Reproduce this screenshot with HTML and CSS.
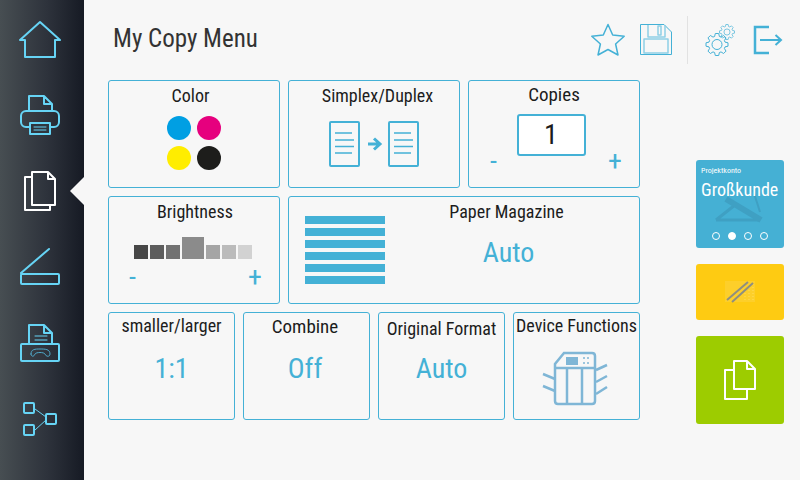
FILE: index.html
```html
<!DOCTYPE html>
<html lang="en">
<head>
    <meta charset="UTF-8">
    <meta name="viewport" content="width=device-width, initial-scale=1.0">
    <title>My Copy Menu</title>
    <link rel="stylesheet" href="styles.css">
</head>
<body>
    <nav class="sidebar">
        <div class="nav-item">
            <svg class="nav-icon" viewBox="16 15 48 48"><path d="M40 22 L60 40 H55 V57 H25 V40 H20 Z"/></svg>
        </div>
        <div class="nav-item">
            <svg class="nav-icon" viewBox="16 92 48 48">
                <path d="M29 112 V97 H44 L52 105 V112 M44 97 V105 H52"/>
                <rect x="21" y="112" width="38" height="16" rx="5"/>
                <rect class="tray" x="30" y="124" width="20" height="11"/>
                <path class="thin" d="M34 128 H46 M34 131 H46"/>
            </svg>
        </div>
        <div class="nav-item nav-item-active">
            <svg class="nav-icon nav-icon-white" viewBox="16 168 48 48">
                <path d="M32 178 H25 V211 H50 V206"/>
                <path d="M32 173 H48 L55 180 V206 H32 Z M48 173 V180 H55"/>
            </svg>
        </div>
        <div class="nav-item">
            <svg class="nav-icon" viewBox="16 244 48 48">
                <path d="M49 250 L21 274"/>
                <rect x="21" y="275" width="38" height="10" rx="1"/>
            </svg>
        </div>
        <div class="nav-item">
            <svg class="nav-icon" viewBox="16 320 48 48">
                <path d="M29 345 V326 H44 L52 334 V345 M44 326 V334 H52"/>
                <rect x="21" y="345" width="38" height="17" rx="1"/>
                <path class="thin" d="M35 337 H47 M35 341 H47"/>
                <path class="thin thin-dim" d="M31 355 C31 350 35 350 40 350 C45 350 50 350 50 355 C50 358 46 358 45 355 C44 353 36 353 35 355 C34 358 31 358 31 355 Z"/>
            </svg>
        </div>
        <div class="nav-item">
            <svg class="nav-icon" viewBox="16 396 48 48">
                <rect x="24" y="404" width="10" height="10" rx="1"/>
                <rect x="24" y="426" width="10" height="10" rx="1"/>
                <rect x="46" y="415" width="10" height="10" rx="1"/>
                <path class="thin" d="M35 410 L46 418 M35 431 L46 421"/>
            </svg>
        </div>
    </nav>

    <main class="main">
        <header class="topbar">
            <h1 class="page-title">My Copy Menu</h1>
            <div class="top-actions">
                <svg class="top-icon" viewBox="584 16 48 48">
                    <path d="M608 24.5 L612.7 35 L624.2 36.2 L615.6 44 L618 55 L608 49.5 L598 55 L600.4 44 L591.8 36.2 L603.3 35 Z"/>
                </svg>
                <svg class="top-icon top-icon-thin" viewBox="632 16 48 48">
                    <path d="M640.500 24.500 H664 L671.500 32 V54.500 H640.500 Z"/>
                    <path class="pale" d="M648 25 V37 H665 V25 M658 26 H661 V35 H658 Z M644 53 V39 H668 V53 Z"/>
                </svg>
                <div class="top-divider"></div>
                <svg class="top-icon top-icon-thin" viewBox="696 16 48 48">
                    <defs>
                        <path id="gear" d="M-2.4-8 L-1.7-11 H1.7 L2.4-8 L4-7.4 L6.6-9 L9-6.6 L7.4-4 L8-2.4 L11-1.7 V1.7 L8 2.4 L7.4 4 L9 6.6 L6.6 9 L4 7.4 L2.4 8 L1.7 11 H-1.7 L-2.4 8 L-4 7.4 L-6.6 9 L-9 6.6 L-7.4 4 L-8 2.4 L-11 1.7 V-1.7 L-8-2.4 L-7.4-4 L-9-6.6 L-6.6-9 L-4-7.4 Z"/>
                    </defs>
                    <use href="#gear" x="717" y="44.5"/>
                    <circle cx="717" cy="44.5" r="5"/>
                    <g transform="translate(727 32) scale(.68)"><use href="#gear"/><circle r="4.5"/></g>
                </svg>
                <svg class="top-icon top-icon-bold" viewBox="744 16 48 48">
                    <path d="M769 27 H755 V53 H769"/>
                    <path class="exit-arrow" d="M760 40 H781 M775.500 35 L781 40 L775.500 45"/>
                </svg>
            </div>
        </header>

        <div class="content">
            <section class="tiles">
                <div class="tile-row">
                    <div class="tile">
                        <div class="tile-title tile-title-low title-left">Color</div>
                        <div class="ink-grid">
                            <span class="ink ink-cyan"></span>
                            <span class="ink ink-magenta"></span>
                            <span class="ink ink-yellow"></span>
                            <span class="ink ink-black"></span>
                        </div>
                    </div>
                    <div class="tile">
                        <div class="tile-title tile-title-low title-right">Simplex/Duplex</div>
                        <svg class="duplex-icon" viewBox="326 118 97 53">
                            <rect x="330" y="123" width="29" height="44" rx="1"/>
                            <rect x="389" y="123" width="29" height="44" rx="1"/>
                            <path class="duplex-lines" d="M335 134 H352 M335 141 H354 M335 147.500 H354 M335 154 H352 M394 134 H411 M394 141 H413 M394 147.500 H413 M394 154 H411"/>
                            <path class="duplex-arrow" d="M368 145 H379 M374 139.500 L380 145 L374 150.500"/>
                        </svg>
                    </div>
                    <div class="tile">
                        <div class="tile-title tile-title-large">Copies</div>
                        <div class="copies-box">1</div>
                        <div class="stepper stepper-copies"><span>-</span><span>+</span></div>
                    </div>
                </div>

                <div class="tile-row">
                    <div class="tile tile-brightness">
                        <div class="tile-title tile-title-low title-nudge">Brightness</div>
                        <div class="levels">
                            <span class="level level-1"></span>
                            <span class="level level-2"></span>
                            <span class="level level-3"></span>
                            <span class="level level-4"></span>
                            <span class="level level-5"></span>
                            <span class="level level-6"></span>
                            <span class="level level-7"></span>
                        </div>
                        <div class="stepper"><span>-</span><span>+</span></div>
                    </div>
                    <div class="tile tile-wide">
                        <div class="paper-stack">
                            <span></span><span></span><span></span><span></span><span></span><span></span>
                        </div>
                        <div class="paper-info">
                            <div class="tile-title tile-title-low">Paper Magazine</div>
                            <div class="tile-value tile-value-paper">Auto</div>
                        </div>
                    </div>
                </div>

                <div class="tile-row tile-row-small">
                    <div class="tile">
                        <div class="tile-title tile-title-high">smaller/larger</div>
                        <div class="tile-value">1:1</div>
                    </div>
                    <div class="tile tile-combine">
                        <div class="tile-title tile-title-large">Combine</div>
                        <div class="tile-value">Off</div>
                    </div>
                    <div class="tile">
                        <div class="tile-title tile-title-lower">Original Format</div>
                        <div class="tile-value">Auto</div>
                    </div>
                    <div class="tile">
                        <div class="tile-title tile-title-high">Device Functions</div>
                        <svg class="device-icon" viewBox="541 350 68 56">
                            <path d="M555 401 V364 L564 353 H592 Q595 353 595 356 V401 Q595 404 592 404 H558 Q555 404 555 401 Z M555 368 H595 M567 368 V404 M582 368 V404"/>
                            <path d="M543 374 L555 379 M543 386 L555 391 M596 370 L607 365 M596 382 L607 376 M596 394 L607 387"/>
                            <rect class="device-panel" x="566" y="357" width="12" height="8"/>
                            <path class="device-dots" d="M583 358 h2 M587 358 h2 M583 363 h2 M587 363 h2"/>
                        </svg>
                    </div>
                </div>
            </section>

            <aside class="side">
                <div class="side-card side-account">
                    <svg class="account-mark" viewBox="696 160 88 88">
                        <path d="M716 220 L735 205 M716 220 H758"/>
                        <path class="account-mark-bar" d="M726 199 L761 220"/>
                        <path class="account-mark-thin" d="M753 190 L760 212"/>
                    </svg>
                    <div class="account-label">Projektkonto</div>
                    <div class="account-name">Großkunde</div>
                    <div class="dots">
                        <span class="dot"></span><span class="dot dot-on"></span><span class="dot"></span><span class="dot"></span>
                    </div>
                </div>
                <div class="side-card side-staple">
                    <svg class="staple-icon" viewBox="720 276 40 32">
                        <rect class="staple-sheet" x="725" y="281" width="30" height="21"/>
                        <path class="staple-dots" d="M745 300 V289 M749 300 V286 M753 300 V284"/>
                        <path d="M727 300 L748 282 M732 302 L753 283"/>
                    </svg>
                </div>
                <div class="side-card side-start">
                    <svg class="start-icon" viewBox="716 356 48 48">
                        <path d="M734 370 H725 V399 H747 V389"/>
                        <path d="M734 361 H747 L755 369 V389 H734 Z M747 361 V369 H755"/>
                    </svg>
                </div>
            </aside>
        </div>
    </main>
</body>
</html>
```

FILE: styles.css
```css
* {
    box-sizing: border-box;
}

body {
    margin: 0;
    width: 800px;
    height: 480px;
    display: flex;
    overflow: hidden;
    background: #f7f7f7;
    font-family: 'Roboto', 'Liberation Sans', sans-serif;
    font-stretch: 75%;
    color: #1c1c1c;
}

/* Left navigation */
.sidebar {
    width: 84px;
    height: 480px;
    padding: 1px 4px 0 0;
    flex-shrink: 0;
    background: linear-gradient(90deg, #474e52, #2e333c 55%, #161a24);
}

.nav-item {
    position: relative;
    height: 76px;
    display: flex;
    justify-content: center;
    align-items: center;
}

.nav-item-active::after {
    content: "";
    position: absolute;
    right: -4px;
    top: 24px;
    border-style: solid;
    border-width: 14px 14px 14px 0;
    border-color: transparent #f7f7f7 transparent transparent;
}

.nav-icon {
    width: 48px;
    height: 48px;
    fill: none;
    stroke: #66d4f5;
    stroke-width: 2;
    stroke-linejoin: round;
    stroke-linecap: round;
}

.nav-icon-white {
    stroke: #fff;
}

.nav-icon .tray {
    fill: #30363e;
}

.nav-icon .thin {
    stroke-width: 1;
}

.nav-icon .thin-dim {
    stroke: #4fa9c9;
}

/* Main area */
.main {
    flex: 1;
    display: flex;
    flex-direction: column;
    padding-left: 24px;
}

.topbar {
    height: 80px;
    display: flex;
    justify-content: space-between;
    align-items: center;
}

.page-title {
    margin: 0 0 4px 5px;
    font-size: 25px;
    font-weight: 400;
    color: #333;
}

.top-actions {
    display: flex;
    align-items: center;
    margin-right: 8px;
}

.top-icon {
    width: 48px;
    height: 48px;
    fill: none;
    stroke: #44b1d6;
    stroke-width: 1.5;
    stroke-linejoin: round;
}

.top-icon-thin {
    stroke-width: 1;
}

.top-icon-bold {
    stroke-width: 2.5;
    stroke-linejoin: miter;
}

.top-icon .pale {
    stroke: #8fcfe6;
    stroke-width: 1.5;
}

.top-icon .exit-arrow {
    stroke-width: 2;
}

.top-divider {
    width: 1px;
    height: 48px;
    margin: 0 8px 0 7px;
    background: #e2e2e2;
}

.content {
    display: flex;
}

/* Tiles */
.tiles {
    width: 532px;
    display: flex;
    flex-direction: column;
    gap: 8px;
}

.tile-row {
    display: flex;
    gap: 8px;
}

.tile {
    flex: 1;
    height: 108px;
    padding-top: 3px;
    display: flex;
    flex-direction: column;
    align-items: center;
    border: 1px solid #44b1d6;
    border-radius: 3px;
}

.tile-row-small .tile {
    flex: 0 0 127px;
}

.tile-brightness {
    flex: none;
    width: 172px;
}

.tile-combine {
    padding-right: 3px;
}

.tile-wide {
    flex-direction: row;
    align-items: flex-start;
    padding: 3px 0 0 16px;
}

.tile-title {
    font-size: 18px;
    line-height: 21px;
    white-space: nowrap;
}

.tile-title-large {
    font-size: 19px;
}

.tile-title-high {
    margin-top: -1px;
    margin-bottom: 1px;
}

.tile-title-low {
    margin-top: 1px;
    margin-bottom: -1px;
}

.tile-title-lower {
    margin-top: 2px;
    margin-bottom: -2px;
}

.title-left {
    margin-right: 7px;
}

.title-right {
    margin-left: 7px;
}

.title-nudge {
    margin-left: 2px;
}

.tile-value {
    margin-top: 15px;
    font-size: 28px;
    line-height: 34px;
    color: #44b1d6;
}

.tile-value-paper {
    margin-left: 4px;
}

/* Color tile */
.ink-grid {
    display: grid;
    grid-template-columns: 24px 24px;
    gap: 6px;
    margin-top: 11px;
}

.ink {
    width: 24px;
    height: 24px;
    border-radius: 50%;
}

.ink-cyan { background: #009fe3; }
.ink-magenta { background: #e6007e; }
.ink-yellow { background: #ffed00; }
.ink-black { background: #1d1d1b; }

.duplex-icon {
    width: 97px;
    height: 53px;
    margin-top: 12px;
    fill: none;
    stroke: #44b1d6;
    stroke-width: 2;
}

.duplex-lines {
    stroke-width: 1.5;
}

.duplex-arrow {
    stroke-width: 3;
}

/* Copies tile */
.copies-box {
    width: 69px;
    height: 42px;
    margin: 9px 6px 0 0;
    background: #fff;
    border: 2px solid #44b1d6;
    border-radius: 3px;
    font-size: 28px;
    line-height: 38px;
    text-align: center;
}

.stepper {
    width: 100%;
    padding: 0 17px 0 21px;
    display: flex;
    justify-content: space-between;
    font-size: 28px;
    line-height: 24px;
    color: #44b1d6;
}

.stepper-copies {
    margin-top: -7px;
}

/* Brightness tile */
.levels {
    width: 118px;
    height: 22px;
    margin: 16px 2px 0 0;
    display: flex;
    align-items: flex-end;
    gap: 2px;
}

.level {
    width: 14px;
    height: 14px;
}

.level-1 { background: #474747; }
.level-2 { background: #5d5d5d; }
.level-3 { background: #727272; }
.level-4 { width: 22px; height: 22px; background: #8b8b8b; }
.level-5 { background: #a5a5a5; }
.level-6 { background: #bbb; }
.level-7 { background: #d2d2d2; }

.tile-brightness .stepper {
    margin-top: 6px;
    padding-left: 20px;
}

/* Paper tile */
.paper-stack {
    width: 80px;
    margin-top: 16px;
    display: flex;
    flex-direction: column;
    gap: 4px;
    flex-shrink: 0;
}

.paper-stack span {
    height: 8px;
    background: #44b1d6;
}

.paper-info {
    flex: 1;
    padding-right: 11px;
    display: flex;
    flex-direction: column;
    align-items: center;
}

.device-icon {
    width: 68px;
    height: 56px;
    margin: 13px 3px 0 0;
    fill: none;
    stroke: #7fb6d6;
    stroke-width: 2.5;
}

.device-icon .device-panel {
    fill: #7fb6d6;
    stroke: none;
}

.device-icon .device-dots {
    stroke-width: 1.5;
}

/* Right column */
.side {
    width: 88px;
    margin-left: 56px;
    padding-top: 80px;
    display: flex;
    flex-direction: column;
    gap: 16px;
}

.side-card {
    position: relative;
    width: 88px;
    display: flex;
    justify-content: center;
    align-items: center;
    border-radius: 3px;
}

.side-account {
    height: 88px;
    padding: 5px 5px 0;
    flex-direction: column;
    align-items: flex-start;
    justify-content: flex-start;
    background: #45b0d4;
    color: #fff;
}

.account-mark {
    position: absolute;
    left: 0;
    top: 0;
    width: 88px;
    height: 88px;
    fill: none;
    stroke: #3fa0c3;
    stroke-width: 3;
}

.account-mark-bar {
    stroke-width: 6;
}

.account-mark-thin {
    stroke-width: 2;
}

.account-label {
    position: relative;
    font-size: 8px;
    line-height: 11px;
}

.account-name {
    position: relative;
    margin-top: 3px;
    font-size: 18px;
    line-height: 22px;
}

.dots {
    position: absolute;
    left: 16px;
    bottom: 8px;
    display: flex;
    gap: 8px;
}

.dot {
    width: 8px;
    height: 8px;
    border: 1px solid #fff;
    border-radius: 50%;
}

.dot-on {
    background: #fff;
}

.side-staple {
    height: 56px;
    background: #fecb12;
}

.staple-icon {
    width: 40px;
    height: 32px;
    fill: none;
    stroke: #8f8f80;
    stroke-width: 2;
}

.staple-icon .staple-sheet {
    fill: #fdcf2a;
    stroke: none;
}

.staple-icon .staple-dots {
    stroke: #ffdc5c;
    stroke-dasharray: 1 2;
    stroke-width: 1;
}

.side-start {
    height: 88px;
    background: #9dcc00;
}

.start-icon {
    width: 48px;
    height: 48px;
    fill: none;
    stroke: #fff;
    stroke-width: 2;
    stroke-linejoin: round;
}
```
